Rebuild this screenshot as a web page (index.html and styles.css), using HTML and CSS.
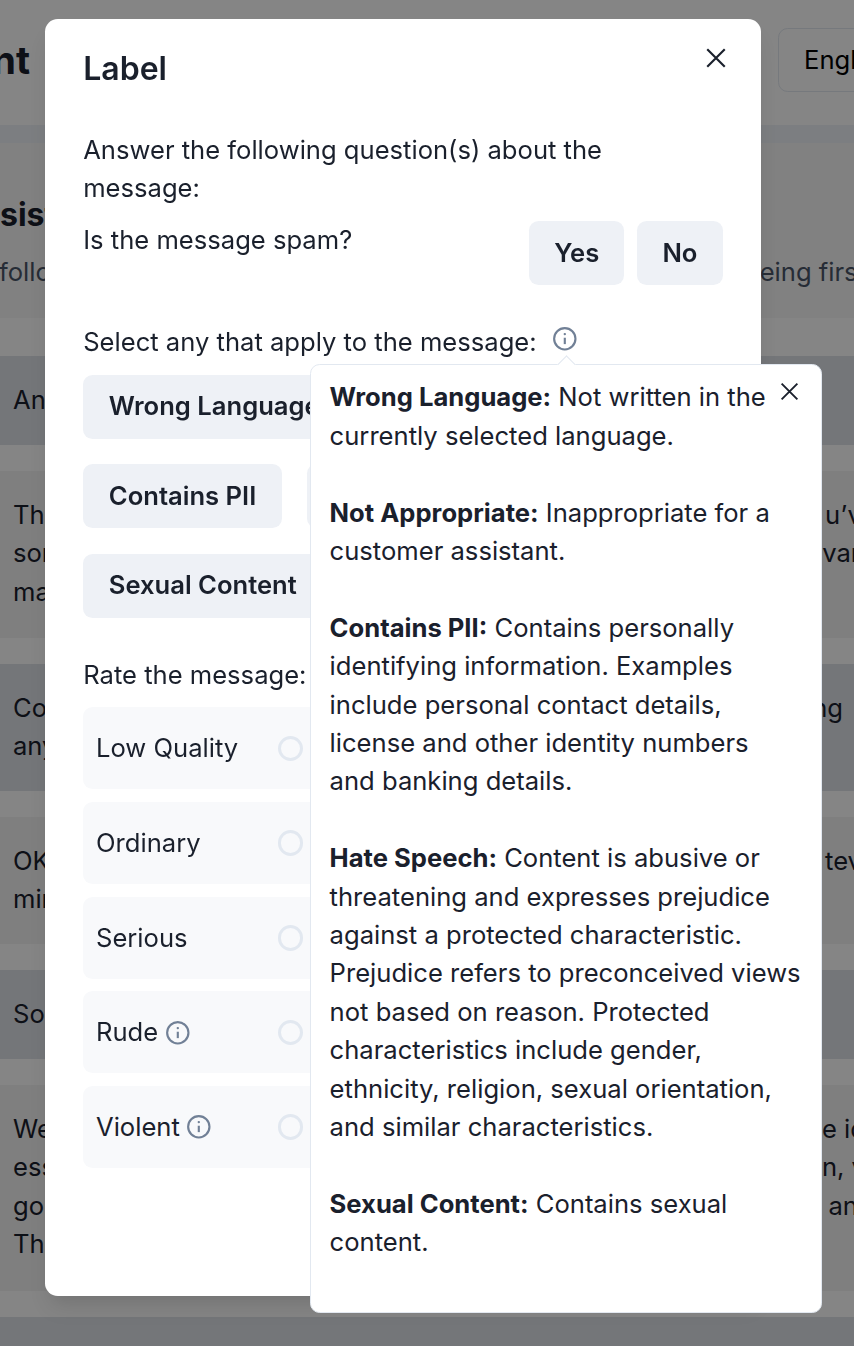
FILE: index.html
```html
<!DOCTYPE html>
<html>
<head>
    <title>Label</title>
    <link rel="stylesheet" href="styles.css">
</head>
<body>
    <div class="page">
        <header class="top-bar">
            <span class="page-title">nt</span>
            <span class="lang-select">English</span>
        </header>

        <section class="panel-intro">
            <h2 class="panel-title">sist</h2>
            <div class="line"><span>follo</span><span>eing first</span></div>
        </section>
        <div class="msg msg-dark msg-one"><div class="line"><span>An</span></div></div>
        <div class="msg msg-three">
            <div class="line"><span>Th</span><span class="cut-md">u’v</span></div>
            <div class="line"><span>som</span><span class="cut-lg">van</span></div>
            <div class="line"><span>ma</span></div>
        </div>
        <div class="msg msg-dark msg-two">
            <div class="line"><span>Co</span><span class="gap-sm">ng</span></div>
            <div class="line"><span>any</span></div>
        </div>
        <div class="msg msg-two">
            <div class="line"><span>OK</span><span class="cut-md">tev</span></div>
            <div class="line"><span>min</span></div>
        </div>
        <div class="msg msg-dark msg-one"><div class="line"><span>So</span></div></div>
        <div class="msg msg-four">
            <div class="line"><span>We</span><span class="cut-lg">e id</span></div>
            <div class="line"><span>ess</span><span class="cut-lg">n, v</span></div>
            <div class="line"><span>go</span><span class="cut-sm">an</span></div>
            <div class="line"><span>Th</span></div>
        </div>
        <div class="msg-dark page-end"></div>
    </div>

    <div class="overlay"></div>

    <div class="modal">
        <button class="close-btn">
            <svg viewBox="0 0 24 24" width="30" height="30"><path d="M5 5l14 14M19 5L5 19"/></svg>
        </button>
        <h2 class="modal-title">Label</h2>

        <p class="prompt">Answer the following question(s) about the message:</p>
        <div class="spam-row">
            <p class="prompt">Is the message spam?</p>
            <div class="spam-btns">
                <button class="tag-btn">Yes</button>
                <button class="tag-btn">No</button>
            </div>
        </div>

        <p class="prompt prompt-info">
            Select any that apply to the message:
            <svg class="info-icon" viewBox="0 0 24 24" width="25.6" height="25.6"><circle cx="12" cy="12" r="10"/><path d="M12 11v6"/><circle class="dot" cx="12" cy="7.6" r="0.6"/></svg>
        </p>
        <div class="tags">
            <button class="tag-btn">Wrong Language</button>
            <button class="tag-btn">Not Appropriate</button>
            <button class="tag-btn">Contains PII</button>
            <button class="tag-btn">Hate Speech</button>
            <button class="tag-btn">Sexual Content</button>
        </div>

        <p class="prompt rate-label">Rate the message:</p>
        <div class="rates">
            <div class="rate-row"><span class="rate-name">Low Quality</span><span class="radio"></span></div>
            <div class="rate-row"><span class="rate-name">Ordinary</span><span class="radio"></span></div>
            <div class="rate-row"><span class="rate-name">Serious</span><span class="radio"></span></div>
            <div class="rate-row">
                <span class="rate-name">Rude
                    <svg class="info-icon" viewBox="0 0 24 24" width="25.6" height="25.6"><circle cx="12" cy="12" r="10"/><path d="M12 11v6"/><circle class="dot" cx="12" cy="7.6" r="0.6"/></svg>
                </span>
                <span class="radio"></span>
            </div>
            <div class="rate-row">
                <span class="rate-name">Violent
                    <svg class="info-icon" viewBox="0 0 24 24" width="25.6" height="25.6"><circle cx="12" cy="12" r="10"/><path d="M12 11v6"/><circle class="dot" cx="12" cy="7.6" r="0.6"/></svg>
                </span>
                <span class="radio"></span>
            </div>
        </div>
    </div>

    <div class="popover">
        <span class="popover-arrow"></span>
        <button class="popover-close">
            <svg viewBox="0 0 24 24" width="27" height="27"><path d="M5 5l14 14M19 5L5 19"/></svg>
        </button>
        <p><b>Wrong Language:</b> Not written in the currently selected language.</p>
        <p><b>Not Appropriate:</b> Inappropriate for a customer assistant.</p>
        <p><b>Contains PII:</b> Contains personally identifying information. Examples include personal contact details, license and other identity numbers<br>and banking details.</p>
        <p><b>Hate Speech:</b> Content is abusive or threatening and expresses prejudice against a protected characteristic. Prejudice refers to preconceived views not based on reason. Protected characteristics include gender, ethnicity, religion, sexual orientation, and similar characteristics.</p>
        <p><b>Sexual Content:</b> Contains sexual content.</p>
    </div>
</body>
</html>
```

FILE: styles.css
```css
* {
    box-sizing: border-box;
}
html, body {
    height: 100%;
}
body {
    margin: 0;
    overflow: hidden;
    font-family: Inter, "Noto Sans", sans-serif;
    font-size: 25.6px;
    line-height: 38.4px;
    color: #1a202c;
    background: #fff;
}
p {
    margin: 0;
}

/* page behind the dialog */
.page {
    height: 1346px;
    overflow: hidden;
}
.top-bar {
    height: 125px;
    padding-top: 28px;
    display: flex;
    justify-content: space-between;
    align-items: flex-start;
    background: #fff;
}
.page-title {
    margin-left: -8px;
    font-size: 38.4px;
    font-weight: 700;
    line-height: 64px;
}
.lang-select {
    width: 120px;
    height: 64px;
    margin-right: -44px;
    padding-left: 25px;
    line-height: 62px;
    color: #000;
    border: 1px solid #e2e8f0;
    border-radius: 9.6px;
    overflow: hidden;
    white-space: nowrap;
}
.panel-intro {
    margin-top: 18px;
    height: 175px;
    padding-top: 48px;
    background: #f8f8f8;
    box-shadow: 0 -18px 0 #edf2f7;
}
.panel-title {
    margin: 0;
    font-size: 32px;
    font-weight: 700;
    line-height: 48px;
    white-space: nowrap;
}
.line {
    display: flex;
    justify-content: space-between;
    padding: 0 0 0 13px;
}
.line span {
    white-space: nowrap;
}
.panel-intro .line {
    margin: 14px -12px 0 -1px;
    padding-left: 0;
    color: #4a5568;
}
.cut-sm {
    margin-right: -4px;
}
.cut-md {
    margin-right: -8px;
}
.cut-lg {
    margin-right: -12px;
}
.gap-sm {
    margin-right: 11px;
}
.msg {
    margin-top: 26px;
    padding-top: 25px;
    background: #f3f3f3;
}
.panel-intro + .msg {
    margin-top: 38px;
}
.msg-dark {
    background: #dee3e9;
}
.msg-one {
    height: 89px;
}
.msg-two {
    height: 127px;
}
.msg-three {
    height: 167px;
}
.msg-four {
    height: 206px;
}
.page-end {
    margin-top: 26px;
    height: 40px;
}

.overlay {
    position: fixed;
    inset: 0;
    background: rgba(0, 0, 0, 0.48);
}

/* dialog */
.modal {
    position: absolute;
    left: 44.8px;
    top: 19px;
    width: 716.2px;
    height: 1277px;
    padding: 25.6px 38.4px;
    background: #fff;
    border-radius: 12.8px;
    box-shadow: 0 15px 22px -5px rgba(0, 0, 0, 0.1), 0 10px 15px -5px rgba(0, 0, 0, 0.04);
}
.modal-title {
    margin: 0 0 38.4px;
    font-size: 32px;
    font-weight: 600;
    line-height: 48px;
}
.close-btn {
    position: absolute;
    top: 24px;
    right: 30px;
    padding: 0;
    background: none;
    border: none;
    display: flex;
}
.close-btn path, .popover-close path {
    fill: none;
    stroke: #1a202c;
    stroke-width: 1.7;
}
.spam-row {
    display: flex;
    justify-content: space-between;
    align-items: flex-start;
    margin-top: 12.8px;
}
.spam-btns {
    display: flex;
    gap: 12.8px;
}
.spam-btns .tag-btn {
    padding: 0 25.2px;
}
.tag-btn {
    height: 64px;
    padding: 0 25.6px;
    font-family: inherit;
    font-size: 25.6px;
    font-weight: 600;
    color: #1a202c;
    background: #eef1f6;
    border: none;
    border-radius: 9.6px;
    white-space: nowrap;
}
.prompt-info {
    margin-top: 38.4px;
    display: flex;
    align-items: center;
    gap: 15px;
}
.info-icon circle {
    fill: none;
    stroke: #718096;
    stroke-width: 2;
}
.info-icon path {
    fill: none;
    stroke: #718096;
    stroke-width: 2;
}
.info-icon .dot {
    fill: #718096;
    stroke: #718096;
    stroke-width: 1;
}
.prompt-info .info-icon {
    margin-top: -6px;
}
.tags {
    display: flex;
    flex-wrap: wrap;
    gap: 25.6px;
    margin-top: 13.2px;
}
.tags .tag-btn {
    padding-bottom: 2px;
}
.rate-label {
    margin-top: 38.4px;
}
.rates {
    display: flex;
    flex-direction: column;
    gap: 12.8px;
    margin-top: 12.8px;
}
.rate-row {
    height: 81.92px;
    padding: 0 12.8px;
    display: flex;
    justify-content: space-between;
    align-items: center;
    background: #f8f9fb;
    border-radius: 9.6px;
}
.rate-name {
    display: flex;
    align-items: center;
    gap: 6.4px;
}
.radio {
    width: 25.6px;
    height: 25.6px;
    margin-right: 406.5px;
    border: 3px solid #e2e8f0;
    border-radius: 50%;
}

/* tooltip */
.popover {
    position: absolute;
    left: 310px;
    top: 364px;
    width: 512px;
    height: 949px;
    padding: 13.4px 19px 13.4px 18.6px;
    background: #fff;
    border: 1px solid #e2e8f0;
    border-radius: 9.6px;
}
.popover p {
    margin-bottom: 38.4px;
}
.popover b {
    font-weight: 700;
}
.popover-close {
    position: absolute;
    top: 12.5px;
    right: 18.5px;
    padding: 0;
    background: none;
    border: none;
    display: flex;
}
.popover-arrow {
    position: absolute;
    left: 248.5px;
    top: -7.5px;
    width: 13px;
    height: 13px;
    background: #fff;
    border-top: 1px solid #e2e8f0;
    border-left: 1px solid #e2e8f0;
    transform: rotate(45deg);
}
```
